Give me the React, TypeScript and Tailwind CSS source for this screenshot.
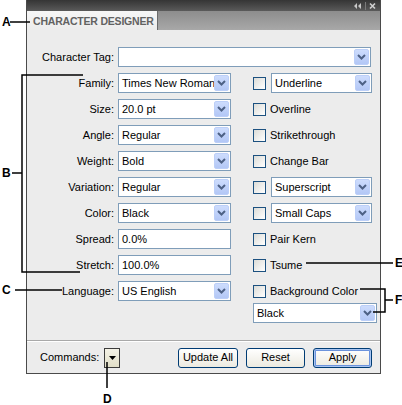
import React from 'react'

function Chevron() {
  return (
    <svg width="9" height="6" viewBox="0 0 9 6" aria-hidden="true">
      <path d="M1 1 L4.5 4.5 L8 1" fill="none" stroke="#4d6185" strokeWidth={2} />
    </svg>
  )
}

function Select({ value, className = '' }: { value: string; className?: string }) {
  return (
    <div className={`relative h-[20px] bg-white border border-[#7f9db9] flex items-center overflow-hidden ${className}`}>
      <span className="pl-[3px] whitespace-nowrap">{value}</span>
      <span className="absolute right-[1px] top-[1px] bottom-[1px] w-[15px] rounded-[2px] border border-[#bccff8] bg-gradient-to-b from-[#cddcfd] to-[#b3c7f6] flex items-center justify-center">
        <Chevron />
      </span>
    </div>
  )
}

function TextInput({ value }: { value: string }) {
  return (
    <div className="h-[20px] w-[113px] bg-white border border-[#7f9db9] flex items-center">
      <span className="pl-[3px] whitespace-nowrap">{value}</span>
    </div>
  )
}

function Check() {
  return <span className="w-[13px] h-[13px] shrink-0 border border-[#1c5180] bg-gradient-to-br from-[#dcdcd7] to-white" />
}

const leftRows: { label: string; value: string; input?: boolean }[] = [
  { label: 'Family:', value: 'Times New Roman' },
  { label: 'Size:', value: '20.0 pt' },
  { label: 'Angle:', value: 'Regular' },
  { label: 'Weight:', value: 'Bold' },
  { label: 'Variation:', value: 'Regular' },
  { label: 'Color:', value: 'Black' },
  { label: 'Spread:', value: '0.0%', input: true },
  { label: 'Stretch:', value: '100.0%', input: true },
  { label: 'Language:', value: 'US English' },
]

const rightRows: { label: string; select?: boolean }[] = [
  { label: 'Underline', select: true },
  { label: 'Overline' },
  { label: 'Strikethrough' },
  { label: 'Change Bar' },
  { label: 'Superscript', select: true },
  { label: 'Small Caps', select: true },
  { label: 'Pair Kern' },
  { label: 'Tsume' },
  { label: 'Background Color' },
]

function XpButton({ label, primary }: { label: string; primary?: boolean }) {
  return (
    <button
      className={`h-[20px] rounded-[3px] border border-[#003c74] bg-gradient-to-b from-white to-[#eceae0] flex items-center justify-center ${
        primary ? 'shadow-[inset_0_0_0_1px_#a9c5f2,inset_0_0_0_2px_#6c93dc]' : ''
      } ${label === 'Update All' ? 'w-[60px]' : 'w-[59px]'}`}
    >
      {label}
    </button>
  )
}

export default function App() {
  return (
    <div className="relative w-[402px] h-[405px] bg-white text-[11px] text-black font-['Liberation_Sans',Arial,sans-serif] overflow-hidden">
      <div className="ml-[26px] w-[355px] border-x border-b border-[#4a4a4a]">
        {/* title bar */}
        <div className="h-[11px] bg-gradient-to-b from-[#353535] to-[#5a5a5a] flex items-center justify-end pr-[3px]">
          <svg width="24" height="8" viewBox="0 0 24 8" aria-hidden="true">
            <path d="M4 1 L1 4 L4 7 Z M8 1 L5 4 L8 7 Z" fill="#c8c8c8" />
            <path d="M12.5 0 V8" stroke="#7a7a7a" strokeWidth={1} />
            <path d="M17 1.5 L22 6.5 M22 1.5 L17 6.5" stroke="#d0d0d0" strokeWidth={1.6} />
          </svg>
        </div>
        {/* tab row */}
        <div className="h-[19px] flex">
          <div className="w-[131px] bg-gradient-to-b from-[#f6f6f6] to-[#ececec] border-r border-[#6a6a6a] flex items-center pl-[6px] pt-[2px]">
            <span className="font-bold text-[#626262] text-[10.5px] tracking-[-0.2px] whitespace-nowrap">CHARACTER DESIGNER</span>
          </div>
          <div className="flex-1 bg-gradient-to-b from-[#8d8d8d] to-[#a8a8a8]" />
        </div>
        {/* body */}
        <div className="bg-[#ececec]">
          <div className="h-[310px] pt-[17px]">
            <div className="flex items-center h-[20px]">
              <span className="w-[91px] pr-[4px] text-right">Character Tag:</span>
              <Select value="" className="w-[253px]" />
            </div>
            <div className="flex mt-[6px]">
              <div className="flex flex-col gap-[6px]">
                {leftRows.map((r) => (
                  <div key={r.label} className="flex items-center h-[20px]">
                    <span className="w-[91px] pr-[4px] text-right">{r.label}</span>
                    {r.input ? <TextInput value={r.value} /> : <Select value={r.value} className="w-[113px]" />}
                  </div>
                ))}
              </div>
              <div className="ml-[22px] flex flex-col gap-[6px]">
                {rightRows.map((r) => (
                  <div key={r.label} className="flex items-center h-[20px]">
                    <Check />
                    {r.select ? (
                      <Select value={r.label} className="ml-[5px] w-[101px]" />
                    ) : (
                      <span className="ml-[4px]">{r.label}</span>
                    )}
                  </div>
                ))}
                <Select value="Black" className="w-[124px] -mt-[4px]" />
              </div>
            </div>
          </div>
          <div className="h-[1px] bg-[#a9a9a9]" />
          <div className="h-[1px] bg-white" />
          <div className="h-[31px] flex items-center pl-[13px] pr-[8px]">
            <span>Commands:</span>
            <span className="ml-[5px] w-[16px] h-[20px] border border-[#3c3c3c] bg-gradient-to-b from-[#f4f2e6] to-[#e2dfc8] flex items-center justify-center">
              <svg width="7" height="4" viewBox="0 0 7 4" aria-hidden="true">
                <path d="M0 0 H7 L3.5 4 Z" fill="#000" />
              </svg>
            </span>
            <div className="ml-auto flex gap-[8px]">
              <XpButton label="Update All" />
              <XpButton label="Reset" />
              <XpButton label="Apply" primary />
            </div>
          </div>
        </div>
      </div>

      {/* callouts */}
      <svg className="absolute inset-0 pointer-events-none" width="402" height="405" viewBox="0 0 402 405" aria-hidden="true">
        <g stroke="#000" strokeWidth={1.5} fill="none">
          <path d="M10 22 H30" />
          <path d="M12 173 H22 M83 75 H22 V272 H80" />
          <path d="M15 290 H62" />
          <path d="M107 362 V388" />
          <path d="M306 263 H393" />
          <path d="M360 289 H385 V312 H373 M385 300 H393" />
        </g>
      </svg>
      <span className="absolute left-[2px] top-[16px] font-bold text-[12px] leading-none">A</span>
      <span className="absolute left-[2px] top-[167px] font-bold text-[12px] leading-none">B</span>
      <span className="absolute left-[2px] top-[284px] font-bold text-[12px] leading-none">C</span>
      <span className="absolute left-[103px] top-[393px] font-bold text-[12px] leading-none">D</span>
      <span className="absolute left-[395px] top-[257px] font-bold text-[12px] leading-none">E</span>
      <span className="absolute left-[395px] top-[294px] font-bold text-[12px] leading-none">F</span>
    </div>
  )
}
